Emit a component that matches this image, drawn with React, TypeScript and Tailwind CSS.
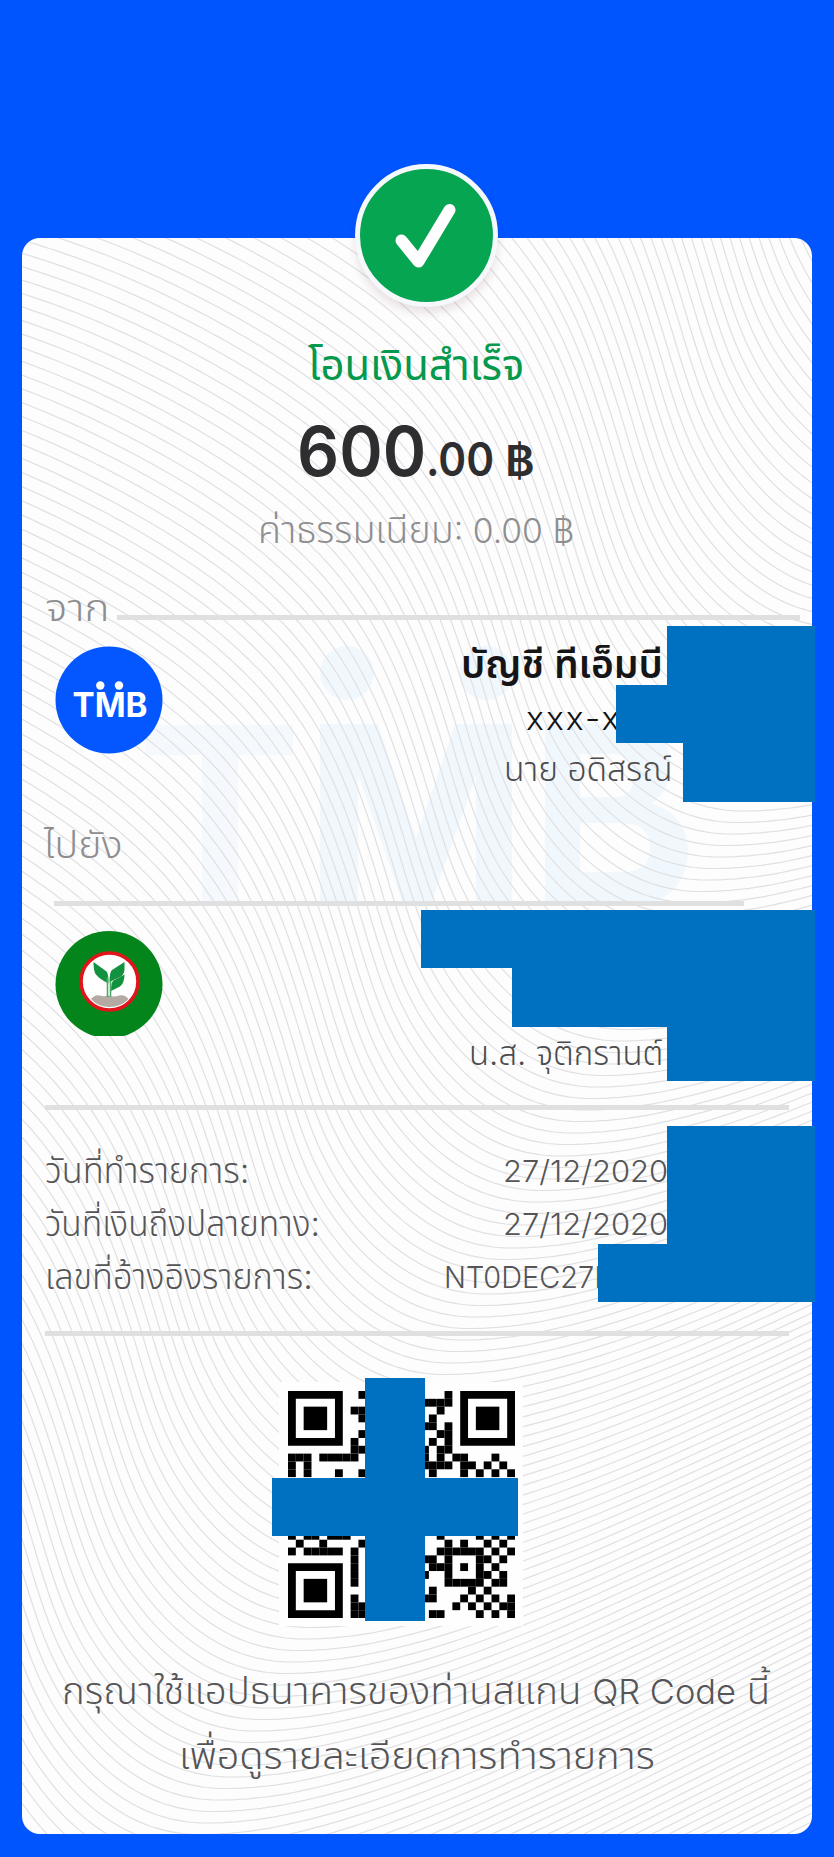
import { useLayoutEffect, useRef, useState, type ReactNode } from "react";

/** One line of text stretched horizontally to a given width. */
function Fit({ width, className = "", children }: { width: number; className?: string; children: ReactNode }) {
  const ref = useRef<HTMLSpanElement>(null);
  const [scale, setScale] = useState(1);
  useLayoutEffect(() => {
    if (ref.current) setScale(width / ref.current.offsetWidth);
  }, [width]);
  return (
    <div className={`shrink-0 ${className}`} style={{ width }}>
      <span ref={ref} className="inline-block origin-left whitespace-nowrap" style={{ transform: `scaleX(${scale})` }}>
        {children}
      </span>
    </div>
  );
}

// Slope of the background wave along u = x + 0.53y.
const SLOPES: [number, number][] = [
  [-100, 0.12], [160, 0.3], [345, 0.5], [430, 0.58], [520, 0.72], [610, 1.0], [690, 1.5], [740, 2.1],
  [800, 2.9], [860, 3.4], [900, 2.9], [935, 2.1], [977, 1.45], [1043, 0.9], [1111, 0.42], [1175, 0],
  [1257, -0.22], [1350, -0.36], [1450, -0.45], [1600, -0.5], [2100, -0.5],
];

function slopeAt(u: number) {
  for (let i = 1; i < SLOPES.length; i++) {
    const [u0, m0] = SLOPES[i - 1];
    const [u1, m1] = SLOPES[i];
    if (u <= u1) return m0 + ((m1 - m0) * (u - u0)) / (u1 - u0);
  }
  return -0.5;
}

function buildWave() {
  const trace = (dir: number, end: number) => {
    const pts: string[] = [];
    let x = 0;
    let y = 0;
    for (let u = 1175; dir * (end - u) > 0; u += dir * 6) {
      const m = slopeAt(u + dir * 3);
      const dx = (dir * 6) / (1 + 0.53 * m);
      x += dx;
      y += m * dx;
      pts.push(`${x.toFixed(1)} ${y.toFixed(1)}`);
    }
    return pts;
  };
  return "M" + [...trace(-1, -90).reverse(), "0 0", ...trace(1, 2050)].join("L");
}

const WAVE = buildWave();
const WAVES = Array.from({ length: 240 }, (_, i) => i - 150);

function Background() {
  return (
    <svg className="absolute inset-0 h-full w-full" viewBox="22 238 790 1596">
      <g fill="#f1f8fd">
        <path fill="#f5f8fd" d="M145 725H293V755H238V901H202V755H145Z" />
        <circle cx="347" cy="673" r="27" />
        <circle cx="486" cy="673" r="27" />
        <path d="M320 724H378L416 838L455 724H512V901H476V775L432 901H402L358 775V901H320Z" />
        <path fillRule="evenodd" d="M545 724H620Q670 724 670 764Q670 790 652 803Q688 816 688 850Q688 885 658 901H545ZM580 754V797H615Q634 797 634 775Q634 754 612 754ZM580 823V872H622Q650 872 650 848Q650 823 620 823Z" />
      </g>
      <g fill="none" stroke="#e0e0e2" strokeWidth="1.2">
        {WAVES.map((k) => (
          <path key={k} d={WAVE} transform={`translate(${(303 - 6.1 * k).toFixed(1)} ${(1639 + 11.5 * k).toFixed(1)})`} />
        ))}
      </g>
    </svg>
  );
}

function TmbLogo() {
  return (
    <svg className="h-[108px] w-[108px]" viewBox="0 0 108 108">
      <circle cx="54" cy="54" r="53.5" fill="#0457ff" />
      <circle cx="45.3" cy="39.5" r="4.2" fill="#fff" />
      <circle cx="64" cy="39.5" r="4.2" fill="#fff" />
      <text x="17.5" y="70.5" fontFamily="Inter, 'Liberation Sans', sans-serif" fontWeight="700" fontSize="33.5" textLength="75" lengthAdjust="spacingAndGlyphs" fill="#fff">
        TMB
      </text>
    </svg>
  );
}

function KbankLogo() {
  return (
    <svg className="h-[105px] w-[108px]" viewBox="0 0 108 105">
      <circle cx="54" cy="53.5" r="53.5" fill="#04851b" />
      <circle cx="54.5" cy="50.5" r="28.5" fill="#fff" stroke="#e0141a" strokeWidth="3.6" />
      <path d="M36 68Q40 63 45 64.500Q49 66 53 64.500Q59 66.500 64 64.500Q70 63 73.500 68Q66 76 54.500 76Q43 76 36 68Z" fill="#b5a9a3" />
      <path d="M38.500 31L51.500 40.500Q53.500 42.500 53.500 52.500Q45 48.500 41 43.500Q38.500 40.500 38.500 31Z" fill="#12913f" />
      <path d="M69.500 31L57 39Q54.500 41 54.500 51L66 45.500Q69.500 43 69.500 38Z" fill="#12913f" />
      <path d="M69.500 43.500L58.500 49.500Q56 51 56 60L65 55.500Q69.500 52 69.500 43.500Z" fill="#12913f" />
      <path d="M52.500 46V66M55.500 50V66" stroke="#4caa68" strokeWidth="1.600" fill="none" />
    </svg>
  );
}

const QR_CELLS: Record<number, number[]> = {
  0: [9, 20],
  1: [17, 18, 19, 20],
  2: [8, 9, 19],
  3: [9, 18],
  4: [17, 18, 20],
  5: [9, 19, 20],
  6: [8, 18, 20],
  7: [8, 9, 17, 19, 20],
  8: [0, 1, 2, 4, 5, 6, 7, 8, 17, 19, 21, 22, 26],
  9: [0, 2, 17, 18, 19, 20, 22, 23, 25, 27],
  10: [0, 2, 6, 9, 18, 22, 24, 26, 28],
  18: [0, 2, 3, 5, 6, 7, 19, 24, 26, 28],
  19: [1, 4, 9, 20, 22, 25, 27],
  20: [0, 2, 3, 4, 5, 6, 8, 19, 20, 21, 22, 23, 24, 26, 28],
  21: [8, 17, 18, 20, 24, 25, 27],
  22: [8, 18, 19, 20, 22, 24, 26],
  23: [8, 17, 20, 24, 25, 27],
  24: [8, 20, 21, 22, 23, 24, 26, 27],
  25: [18, 23, 25],
  26: [8, 17, 18, 22, 24, 26, 28],
  27: [8, 9, 21, 23, 25, 27, 28],
  28: [8, 9, 18, 19, 24, 26, 28],
};

function QrCode() {
  return (
    <svg className="h-[227px] w-[227px]" viewBox="0 0 29 29">
      {[[0, 0], [22, 0], [0, 22]].map(([x, y]) => (
        <g key={`${x}-${y}`}>
          <path fillRule="evenodd" d={`M${x} ${y}h7v7h-7zM${x + 1} ${y + 1}v5h5v-5z`} />
          <rect x={x + 2} y={y + 2} width="3" height="3" />
        </g>
      ))}
      {Object.entries(QR_CELLS).flatMap(([r, cols]) =>
        cols.map((c) => <rect key={`${r}-${c}`} x={c} y={Number(r)} width="1" height="1" />),
      )}
    </svg>
  );
}

function Detail({ label, labelWidth, value, valueWidth, pad }: { label: string; labelWidth: number; value: string; valueWidth: number; pad: string }) {
  return (
    <div className={`flex h-[53px] items-center justify-between pl-[23px] text-[#555557] ${pad}`}>
      <Fit width={labelWidth} className="text-[35px] leading-[53px]">{label}</Fit>
      <Fit width={valueWidth} className="text-[30px] leading-[56px]">{value}</Fit>
    </div>
  );
}

const Mask = ({ className }: { className: string }) => <div className={`absolute bg-[#0070c0] ${className}`} />;

export default function App() {
  return (
    <div className="h-[1857px] w-[834px] bg-[#0055ff] pt-[238px] pl-[22px] font-[Inter,'Noto_Sans_Thai','Noto_Sans',sans-serif]">
      <main className="relative h-[1596px] w-[790px] rounded-[18px] bg-[#fdfdfd]">
        <div className="absolute inset-0 overflow-hidden rounded-[18px]">
          <Background />
        </div>

        <div className="absolute top-[-74px] left-[333px] flex h-[143px] w-[143px] items-center justify-center rounded-full border-[5px] border-[#f6f9fb] bg-[#05a551] shadow-[0_6px_8px_rgba(90,40,60,0.13)]">
          <svg className="h-[133px] w-[133px]" viewBox="0 0 133 133" fill="none" stroke="#fff" strokeWidth="12" strokeLinecap="round" strokeLinejoin="round">
            <path d="M41.500 71.500L58.500 92.500L89.500 41" />
          </svg>
        </div>

        <div className="relative flex flex-col">
          <Fit width={216} className="mt-[99px] ml-[286px] text-[42px] leading-[56px] font-normal text-[#04994c]">โอนเงินสำเร็จ</Fit>
          <div className="mt-[24px] ml-[275px] flex items-baseline font-semibold text-[#2e2e30]">
            <Fit width={129} className="text-[69px] leading-none">600</Fit>
            <Fit width={68} className="text-[46px] leading-none">.00</Fit>
            <Fit width={30} className="ml-[11px] text-[42px] leading-none">฿</Fit>
          </div>
          <Fit width={316} className="mt-[15px] ml-[236px] text-[38px] leading-[56px] font-[350] text-[#8e8e90]">
            ค่าธรรมเนียม<span className="text-[34px]">: 0.00 ฿</span>
          </Fit>

          <div className="mt-[25px] ml-[23px] flex h-[48px] items-center">
            <Fit width={64} className="text-[37px] leading-[48px] font-[350] text-[#8e8e90]">จาก</Fit>
            <div className="mt-[18px] ml-[8px] h-[5px] w-[683px] bg-[#e0e0e1]" />
          </div>

          <section className="flex h-[166px] justify-between pt-[14px] pr-[139px] pl-[33px]">
            <TmbLogo />
            <div className="-mt-[12px] flex flex-col items-end">
              <Fit width={202} className="mr-[10px] text-[39px] leading-[60px] font-semibold text-[#151517]">บัญชี ทีเอ็มบี</Fit>
              <Fit width={96} className="mr-[51px] text-[33px] leading-[49px] font-[350] tracking-[2px] text-[#111111]">xxx-x</Fit>
              <Fit width={169} className="text-[34px] leading-[51px] font-[350] text-[#4c4c4e]">นาย อดิสรณ์</Fit>
            </div>
          </section>

          <Fit width={79} className="mt-[23px] ml-[22px] text-[37px] leading-[48px] font-[350] text-[#8e8e90]">ไปยัง</Fit>
          <div className="mt-[32px] ml-[32px] h-[5px] w-[690px] bg-[#e0e0e1]" />

          <section className="flex h-[199px] justify-between pt-[25px] pr-[149px] pl-[33px]">
            <KbankLogo />
            <Fit width={194} className="mt-[97px] text-[34px] leading-[50px] font-[350] text-[#4c4c4e]">น.ส. จุติกรานต์</Fit>
          </section>

          <div className="ml-[23px] h-[5px] w-[744px] bg-[#e0e0e1]" />
          <div className="mt-[34px] flex flex-col font-[350]">
            <Detail label="วันที่ทำรายการ:" labelWidth={204} value="27/12/2020" valueWidth={165} pad="pr-[144px]" />
            <Detail label="วันที่เงินถึงปลายทาง:" labelWidth={275} value="27/12/2020" valueWidth={165} pad="pr-[144px]" />
            <Detail label="เลขที่อ้างอิงรายการ:" labelWidth={268} value="NT0DEC27I" valueWidth={158} pad="pr-[210px]" />
          </div>
          <div className="mt-[28px] ml-[23px] h-[5px] w-[744px] bg-[#e0e0e1]" />

          <div className="mt-[46px] ml-[257px] flex h-[244px] w-[244px] items-center justify-center bg-[#fefefe]">
            <QrCode />
          </div>

          <Fit width={708} className="mt-[32px] ml-[40px] text-[38px] leading-[64px] font-[350] text-[#555557]">
            กรุณาใช้แอปธนาคารของท่านสแกน <span className="text-[34px]">QR Code</span> นี้
          </Fit>
          <Fit width={476} className="ml-[157px] text-[38px] leading-[62px] font-[350] text-[#555557]">เพื่อดูรายละเอียดการทำรายการ</Fit>
        </div>

        <Mask className="top-[388px] left-[645px] h-[59px] w-[148px]" />
        <Mask className="top-[447px] left-[594px] h-[58px] w-[199px]" />
        <Mask className="top-[505px] left-[661px] h-[59px] w-[132px]" />
        <Mask className="top-[672px] left-[399px] h-[58px] w-[394px]" />
        <Mask className="top-[730px] left-[490px] h-[59px] w-[303px]" />
        <Mask className="top-[788px] left-[645px] h-[55px] w-[148px]" />
        <Mask className="top-[888px] left-[645px] h-[118px] w-[148px]" />
        <Mask className="top-[1006px] left-[576px] h-[58px] w-[217px]" />
        <Mask className="top-[1140px] left-[343px] h-[243px] w-[60px]" />
        <Mask className="top-[1240px] left-[250px] h-[58px] w-[246px]" />
      </main>
    </div>
  );
}
